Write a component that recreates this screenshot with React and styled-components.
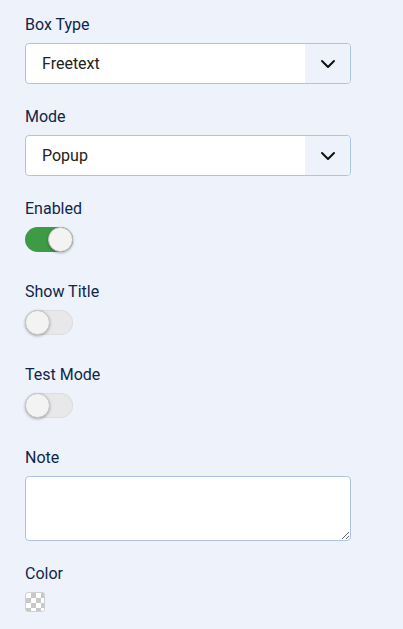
import React from "react";
import styled, { createGlobalStyle } from "styled-components";

const Global = createGlobalStyle`
  html, body { margin: 0; padding: 0; background: #edf2fb; }
  body { font-family: Roboto, "Noto Sans", sans-serif; }
  * { box-sizing: border-box; }
`;

const Page = styled.div`
  min-height: 629px;
  width: 403px;
  background: #edf2fb;
  padding: 16px 52px 16px 25px;
  display: flex;
  flex-direction: column;
  gap: 24px;
`;

const Field = styled.div`
  display: flex;
  flex-direction: column;
  gap: 9px;
`;

const Label = styled.label`
  font-size: 16px;
  line-height: 18px;
  color: #0f2647;
`;

const SelectBox = styled.div`
  display: flex;
  height: 41px;
  width: 326px;
  background: #fff;
  border: 1px solid #aec3df;
  border-radius: 4px;
  overflow: hidden;
`;

const SelectText = styled.div`
  flex: 1;
  display: flex;
  align-items: center;
  padding-left: 16px;
  font-size: 16px;
  color: #222;
`;

const Chevron = styled.div`
  width: 45px;
  display: flex;
  align-items: center;
  justify-content: center;
  background: #eef2fa;
`;

const Select = ({ value }) => (
  <SelectBox>
    <SelectText>{value}</SelectText>
    <Chevron>
      <svg width="16" height="10" viewBox="0 0 16 10">
        <path d="M2 2 L8 8 L14 2" fill="none" stroke="#111" strokeWidth="2" strokeLinecap="round" strokeLinejoin="round" />
      </svg>
    </Chevron>
  </SelectBox>
);

const ToggleWrap = styled.div`
  height: 32px;
`;

const Track = styled.div`
  position: relative;
  width: 48px;
  height: 25px;
  border-radius: 13px;
  background: ${(p) => (p.$on ? "#3f9a47" : "#e8e8ea")};
  box-shadow: ${(p) => (p.$on ? "none" : "inset 0 0 0 1px #dcdde0")};
`;

const Thumb = styled.div`
  position: absolute;
  top: 0;
  left: ${(p) => (p.$on ? "23px" : "0")};
  width: 25px;
  height: 25px;
  border-radius: 50%;
  background: #f3f3f3;
  border: 1px solid #c4c4c4;
  box-shadow: 0 1px 3px rgba(0, 0, 0, 0.3);
`;

const Toggle = ({ on }) => (
  <ToggleWrap>
    <Track $on={on}>
      <Thumb $on={on} />
    </Track>
  </ToggleWrap>
);

const TextArea = styled.textarea`
  width: 326px;
  height: 65px;
  border: 1px solid #aec3df;
  border-radius: 4px;
  background: #fff;
  font-family: Roboto, sans-serif;
  font-size: 16px;
  display: block;
  outline: none;
`;

const Swatch = styled.div`
  width: 20px;
  height: 20px;
  border-radius: 3px;
  border: 1px solid #d0d0d0;
  background-color: #fff;
  background-image:
    linear-gradient(45deg, #c8c8c8 25%, transparent 25%, transparent 75%, #c8c8c8 75%),
    linear-gradient(45deg, #c8c8c8 25%, transparent 25%, transparent 75%, #c8c8c8 75%);
  background-size: 10px 10px;
  background-position: 0 0, 5px 5px;
`;

export default function App() {
  return (
    <>
      <Global />
      <Page>
        <Field>
          <Label>Box Type</Label>
          <Select value="Freetext" />
        </Field>
        <Field>
          <Label>Mode</Label>
          <Select value="Popup" />
        </Field>
        <Field>
          <Label>Enabled</Label>
          <Toggle on />
        </Field>
        <Field>
          <Label>Show Title</Label>
          <Toggle />
        </Field>
        <Field>
          <Label>Test Mode</Label>
          <Toggle />
        </Field>
        <Field>
          <Label>Note</Label>
          <TextArea />
        </Field>
        <Field>
          <Label>Color</Label>
          <Swatch />
        </Field>
      </Page>
    </>
  );
}
